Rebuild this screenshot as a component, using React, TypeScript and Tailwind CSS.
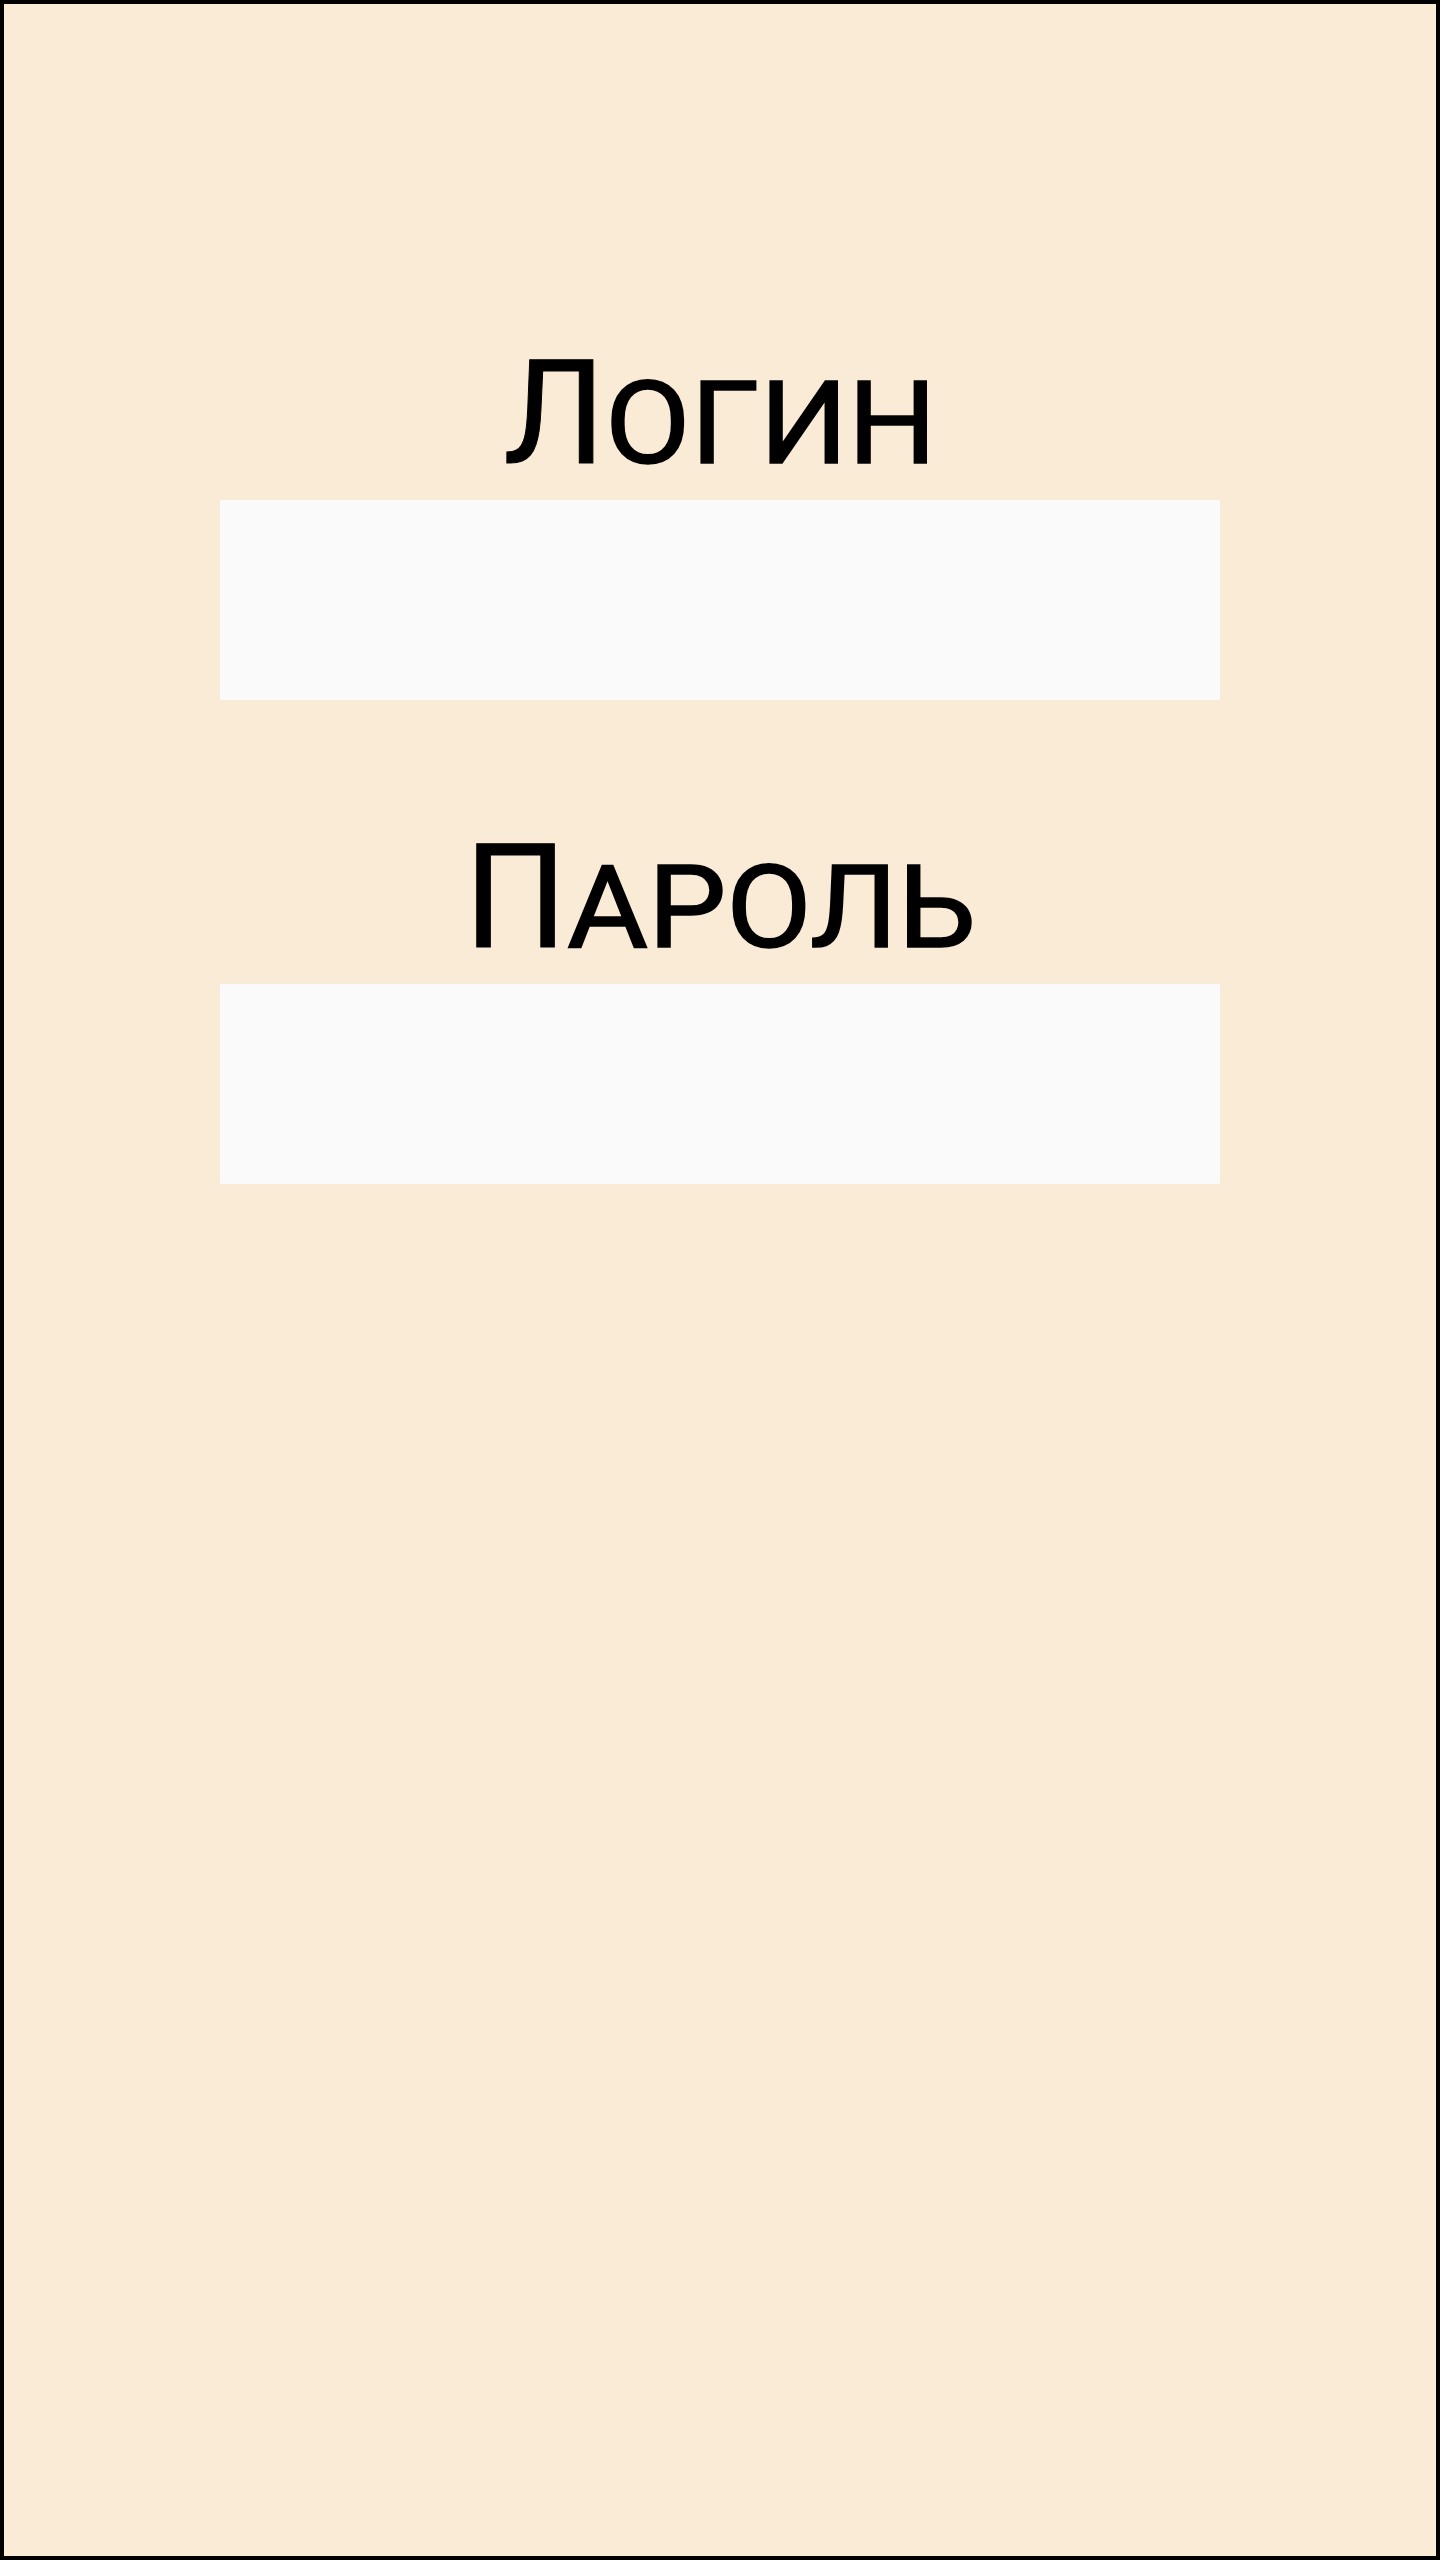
import React from "react";

function Label({ text, restClass }: { text: string; restClass: string }) {
  const first = text.slice(0, 1);
  const rest = text.slice(1).toUpperCase();
  return (
    <div
      className="h-[156px] text-center text-[144px] text-black leading-[140px] whitespace-nowrap [-webkit-text-stroke:1px_black]"
      style={{ fontFamily: "Roboto, sans-serif" }}
    >
      <span>{first}</span>
      <span className={restClass}>{rest}</span>
    </div>
  );
}

export default function App() {
  return (
    <div className="box-border h-[2560px] w-full border-4 border-black bg-[#faebd7] flex flex-col items-center pt-[340px]">
      <Label
        text="Логин"
        restClass="inline-block origin-left scale-x-[1.08] text-[115px] mr-[24px] [-webkit-text-stroke:1.6px_black]"
      />
      <input
        type="text"
        aria-label="Логин"
        className="block h-[200px] w-[1000px] border-0 bg-[#fafafa] outline-none"
      />
      <div className="mt-[128px]">
        <Label
          text="Пароль"
          restClass="inline-block origin-left scale-x-[1.08] text-[115px] mr-[30px] [-webkit-text-stroke:1.6px_black]"
        />
      </div>
      <input
        type="password"
        aria-label="Пароль"
        className="block h-[200px] w-[1000px] border-0 bg-[#fafafa] outline-none"
      />
    </div>
  );
}
